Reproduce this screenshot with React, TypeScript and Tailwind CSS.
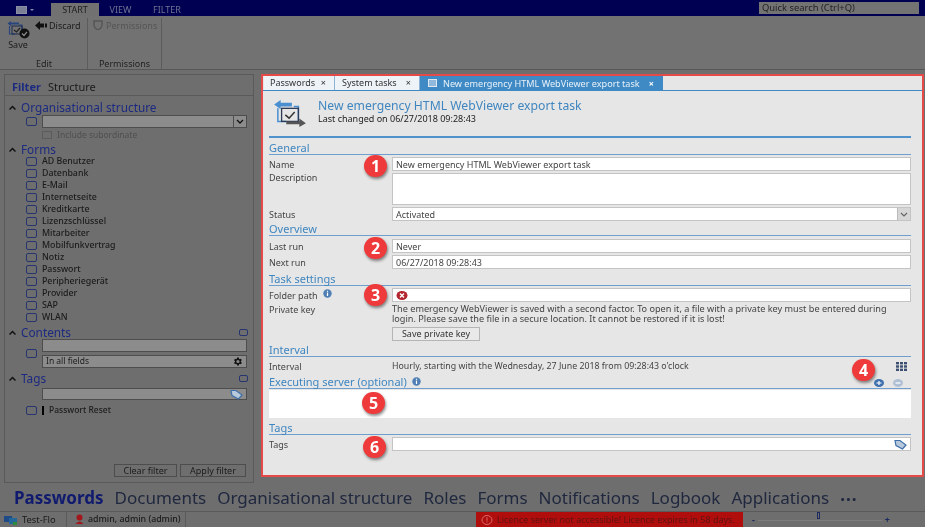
import React from "react";

const Check = ({ className = "" }: { className?: string }) => (
  <div className={`w-[11px] h-[9px] shrink-0 rounded-[2px] border border-[#26346f] ${className}`} />
);

const Chevron = () => (
  <svg width="7" height="6" viewBox="0 0 7 6" className="shrink-0">
    <path d="M0.5 4.5 L3.5 1.5 L6.5 4.5" fill="none" stroke="#111" strokeWidth="1.5" />
  </svg>
);

const TagIcon = () => (
  <svg width="13" height="11" viewBox="0 0 13 11" className="shrink-0">
    <path d="M1 1.5 H6 L12 6 L8.5 10 L2 6.5 Z" fill="#b9c9dc" stroke="#3f6fa8" strokeWidth="1.2" />
  </svg>
);

const Info = () => (
  <svg width="9" height="9" viewBox="0 0 9 9" className="shrink-0">
    <circle cx="4.5" cy="4.5" r="4.2" fill="#4f7fb5" />
    <rect x="3.9" y="3.6" width="1.2" height="3.4" fill="#fff" />
    <rect x="3.9" y="1.8" width="1.2" height="1.1" fill="#fff" />
  </svg>
);

const TaskIcon = () => (
  <svg width="36" height="28" viewBox="0 0 36 30" className="shrink-0">
    <path d="M1 6 L8 1 V4 H20 V8 H8 V11 Z" fill="#4a8fd0" />
    <path d="M5 10 V24 H14 M27 24 V8 H22" fill="none" stroke="#4a8fd0" strokeWidth="1.6" />
    <rect x="9" y="10" width="18" height="14" fill="none" stroke="#2f3a55" strokeWidth="1.4" />
    <path d="M13 17 L17 20.5 L23 14" fill="none" stroke="#333" strokeWidth="1.6" />
    <path d="M14 24 H28 V21 L35 26 L28 30 V27 H14 Z" fill="#555" />
  </svg>
);

const SaveIcon = () => (
  <svg width="23" height="19" viewBox="0 0 23 19" className="shrink-0">
    <path d="M0.5 3.5 L4 1 V2.5 H12 V4.5 H4 V6 Z" fill="#27457c" />
    <path d="M2.5 6 V14 H8 M15 12 V5 H12" fill="none" stroke="#27457c" strokeWidth="1.1" />
    <rect x="5" y="6" width="10" height="8" fill="none" stroke="#1d2b4d" strokeWidth="1" />
    <path d="M7 10 L9.5 12 L13 8" fill="none" stroke="#222" strokeWidth="1.2" />
    <circle cx="17.5" cy="13.5" r="5" fill="#111" />
    <path d="M15 13.5 L17 15.5 L20 11.8" fill="none" stroke="#8a8a8a" strokeWidth="1.2" />
  </svg>
);

const Section = ({ title, info = false, right, className = "" }: { title: string; info?: boolean; right?: React.ReactNode; className?: string }) => (
  <div className={`flex items-end justify-between h-[14px] border-b border-[#6f9fcf] ${className}`}>
    <div className="flex items-center gap-[5px] text-[11px] leading-[13px] text-[#3f86c0]">
      {title}
      {info && <Info />}
    </div>
    {right}
  </div>
);

const Row = ({ label, info = false, children, className = "", labelClass = "pt-[1px] leading-[13px]" }: { label: string; info?: boolean; children: React.ReactNode; className?: string; labelClass?: string }) => (
  <div className={`flex ${className}`}>
    <div className={`w-[123px] shrink-0 flex items-start gap-[5px] text-[#444] ${labelClass}`}>
      {label}
      {info && <Info />}
    </div>
    <div className="flex-1 min-w-0">{children}</div>
  </div>
);

const Input = ({ children, className = "" }: { children?: React.ReactNode; className?: string }) => (
  <div className={`h-[14px] bg-white border border-[#c4c4c4] px-[3px] flex items-center justify-between text-[#444] leading-none ${className}`}>
    {children}
  </div>
);

const Badge = ({ n, className }: { n: number; className: string }) => (
  <div className={`absolute w-[23px] h-[22px] rounded-full bg-[#ee3a3a] text-white text-[16px] font-bold leading-[22px] text-center shadow-[1px_2px_3px_rgba(0,0,0,0.45)] ${className}`}>
    {n}
  </div>
);

const SideHeading = ({ title, toggle = false, className = "" }: { title: string; toggle?: boolean; className?: string }) => (
  <div className={`flex items-center gap-[5px] h-[13px] pl-[4px] pr-[5px] ${className}`}>
    <Chevron />
    <span className="text-[11.8px] leading-none text-[#1c2a80]">{title}</span>
    {toggle && <div className="ml-auto w-[9px] h-[7px] rounded-[2px] border border-[#26346f]" />}
  </div>
);

const SideInput = ({ children, className = "" }: { children?: React.ReactNode; className?: string }) => (
  <div className={`w-[205px] h-[13px] bg-[#8c8c8c] border border-[#4d4d4d] px-[3px] flex items-center justify-between leading-none text-[#1b1b1b] ${className}`}>
    {children}
  </div>
);

const forms = ["AD Benutzer", "Datenbank", "E-Mail", "Internetseite", "Kreditkarte", "Lizenzschlüssel", "Mitarbeiter", "Mobilfunkvertrag", "Notiz", "Passwort", "Peripheriegerät", "Provider", "SAP", "WLAN"];
const nav = ["Documents", "Organisational structure", "Roles", "Forms", "Notifications", "Logbook", "Applications"];

export default function App() {
  return (
    <div className="w-[925px] h-[527px] overflow-hidden flex flex-col bg-[#6e6e6e] text-[9px] text-[#1b1b1b] blur-[0.35px]" style={{ fontFamily: '"Noto Sans", "Open Sans", sans-serif' }}>
      {/* Title bar */}
      <div className="h-[16px] shrink-0 bg-[#000052] flex items-end pl-[15px] pr-[6px]">
        <div className="w-[36px] h-[13px] flex items-center gap-[3px] pl-[1px]">
          <div className="w-[11px] h-[8px] border border-[#8a8fa5] bg-[#7b8097]" />
          <div className="w-0 h-0 border-x-[2px] border-x-transparent border-t-[2px] border-t-[#8a8fa5]" />
        </div>
        <div className="w-[48px] h-[13px] bg-[#717171] text-center leading-[13px] text-[#1d1d1d] text-[9px]">START</div>
        <div className="w-[43px] h-[13px] text-center leading-[13px] text-[#6d7290] text-[9px]">VIEW</div>
        <div className="w-[50px] h-[13px] text-center leading-[13px] text-[#6d7290] text-[9px]">FILTER</div>
        <div className="ml-auto mb-[1px] w-[160px] h-[12px] bg-[#737373] pl-[3px] leading-[12px] text-[#222] text-[9.4px] self-center mt-[1px]">Quick search (Ctrl+Q)</div>
      </div>

      {/* Ribbon */}
      <div className="h-[54px] shrink-0 flex border-b border-[#575757] pt-[2px] bg-[#727272]">
        <div className="w-[88px] flex flex-col border-r border-[#5c5c5c]">
          <div className="flex-1 flex">
            <div className="w-[35px] flex flex-col items-center pl-[1px] pt-[2px]">
              <SaveIcon />
              <span className="mt-[0px] leading-[11px]">Save</span>
            </div>
            <div className="flex items-start gap-[2px] pt-[2px]">
              <svg width="12" height="9" viewBox="0 0 12 9" className="mt-[1px]"><path d="M0 4.5 L5 0 V2.5 H9 V6.5 H5 V9 Z" fill="#111" /><rect x="10" y="2.5" width="2" height="4" fill="#111" /></svg>
              <span className="leading-[11px]">Discard</span>
            </div>
          </div>
          <div className="h-[11px] text-center leading-[11px] text-[#222] pl-[1px]">Edit</div>
        </div>
        <div className="w-[74px] flex flex-col border-r border-[#5c5c5c]">
          <div className="flex-1 flex items-start gap-[3px] pl-[5px] pt-[2px] text-[#555]">
            <svg width="10" height="10" viewBox="0 0 10 10"><path d="M1 1 H9 V5 Q9 8 5 10 Q1 8 1 5 Z" fill="none" stroke="#555" strokeWidth="1.4" /></svg>
            <span className="leading-[11px]">Permissions</span>
          </div>
          <div className="h-[11px] text-center leading-[11px] text-[#222]">Permissions</div>
        </div>
      </div>

      {/* Main */}
      <div className="flex-1 min-h-0 flex items-start pt-[4px] pl-[4px] pr-[1px]">
        {/* Sidebar */}
        <div className="w-[250px] h-[409px] shrink-0 border border-[#5a5a5a] flex flex-col">
          <div className="h-[21px] flex items-end gap-[7px] pl-[7px] pb-[1px] border-b border-[#5a5a5a] text-[11px] leading-[14px]">
            <span className="font-bold text-[#1c2a80]">Filter</span>
            <span>Structure</span>
          </div>
          <SideHeading title="Organisational structure" className="mt-[5px]" />
          <div className="flex items-center gap-[5px] pl-[21px] mt-[1px]">
            <Check />
            <SideInput className="!pr-0">
              <span className="ml-auto w-[13px] h-full border-l border-[#4d4d4d] flex items-center justify-center">
                <svg width="8" height="5" viewBox="0 0 8 5"><path d="M1 1 L4 4 L7 1" fill="none" stroke="#111" strokeWidth="1.3" /></svg>
              </span>
            </SideInput>
          </div>
          <div className="flex items-center gap-[5px] pl-[37px] mt-[1px] h-[12px] text-[#4f4f4f]">
            <div className="w-[10px] h-[8px] border border-[#5c5c5c]" />
            <span className="text-[8.5px]">Include subordinate</span>
          </div>
          <SideHeading title="Forms" className="mt-[2px]" />
          <div className="flex flex-col -mt-[1px]">
            {forms.map((f) => (
              <div key={f} className="h-[12px] flex items-center gap-[5px] pl-[21px] leading-none">
                <Check />
                <span className="font-medium text-[8.8px]">{f}</span>
              </div>
            ))}
          </div>
          <SideHeading title="Contents" toggle className="mt-[3px]" />
          <div className="flex items-center gap-[5px] pl-[21px]">
            <Check />
            <div className="flex flex-col gap-[3px]">
              <SideInput />
              <SideInput>
                <span className="text-[8.5px]">In all fields</span>
                <svg width="11" height="11" viewBox="0 0 24 24"><path fill="#111" d="M19.4 13a7.5 7.5 0 0 0 0-2l2.1-1.6-2-3.5-2.5 1a7.5 7.5 0 0 0-1.7-1L15 3.2h-4l-.4 2.7a7.5 7.5 0 0 0-1.7 1l-2.5-1-2 3.5L6.5 11a7.5 7.5 0 0 0 0 2l-2.1 1.6 2 3.5 2.5-1a7.5 7.5 0 0 0 1.7 1l.4 2.7h4l.4-2.7a7.5 7.5 0 0 0 1.7-1l2.5 1 2-3.5zM13 15.5a3.5 3.5 0 1 1 0-7 3.5 3.5 0 0 1 0 7z" /></svg>
              </SideInput>
            </div>
          </div>
          <SideHeading title="Tags" toggle className="mt-[4px]" />
          <div className="pl-[37px] mt-[3px]">
            <SideInput className="!h-[12px]"><span /><TagIcon /></SideInput>
          </div>
          <div className="flex items-center gap-[5px] pl-[21px] mt-[4px] h-[12px]">
            <Check />
            <div className="w-[2px] h-[9px] bg-black" />
            <span className="font-medium text-[8.5px]">Passwort Reset</span>
          </div>
          <div className="mt-auto mb-[5px] flex justify-end gap-[3px] pr-[7px]">
            <div className="w-[63px] h-[13px] border border-[#4d4d4d] text-center leading-[11px]">Clear filter</div>
            <div className="w-[66px] h-[13px] border border-[#4d4d4d] text-center leading-[11px]">Apply filter</div>
          </div>
        </div>

        {/* Right panel */}
        <div className="relative ml-[7px] w-[663px] h-[403px] border-[2px] border-[#e34a48] bg-[#e6e6e6] flex flex-col">
          {/* Tabs */}
          <div className="h-[15px] shrink-0 flex border-b border-[#3f8ac5] pl-[1px] text-[9px] leading-[13px] text-[#333] bg-[#e6e6e6]">
            <div className="w-[71px] bg-[#eef3f7] border-r border-[#8fb4d4] pl-[6px] flex justify-between pr-[8px]"><span>Passwords</span><span>×</span></div>
            <div className="w-[85px] bg-[#eef3f7] border-r border-[#8fb4d4] pl-[7px] flex justify-between pr-[8px]"><span>System tasks</span><span>×</span></div>
            <div className="w-[243px] bg-[#3f8ac5] text-white pl-[8px] pr-[9px] flex items-center gap-[6px]">
              <div className="w-[9px] h-[8px] border border-[#dfe8f0] bg-[#8fb8dc]" />
              <span className="text-[#e8f1f8] text-[9.1px] whitespace-nowrap">New emergency HTML WebViewer export task</span>
              <span className="ml-auto font-bold">×</span>
            </div>
          </div>
          {/* Form */}
          <div className="flex-1 flex flex-col pl-[6px] pr-[11px]">
            <div className="h-[47px] shrink-0 flex pl-[3px] pt-[8px] gap-[10px] border-b-[2px] border-[#4f92cc]">
              <TaskIcon />
              <div className="-mt-[1px]">
                <div className="text-[12.2px] leading-[15px] text-[#3f86c0] whitespace-nowrap">New emergency HTML WebViewer export task</div>
                <div className="leading-[11px] text-[#222]">Last changed on 06/27/2018 09:28:43</div>
              </div>
            </div>
            <Section title="General" className="mt-[3px]" />
            <Row label="Name" className="mt-[2px]"><Input>New emergency HTML WebViewer export task</Input></Row>
            <Row label="Description" className="mt-[2px]" labelClass="leading-[10px]"><Input className="!h-[32px]" /></Row>
            <Row label="Status" className="mt-[2px]">
              <Input className="!pr-0">
                Activated
                <span className="w-[13px] h-full bg-[#d6d6d6] border-l border-[#bbb] flex items-center justify-center">
                  <svg width="8" height="5" viewBox="0 0 8 5"><path d="M1 1 L4 4 L7 1" fill="none" stroke="#666" strokeWidth="1.2" /></svg>
                </span>
              </Input>
            </Row>
            <Section title="Overview" className="mt-[1px]" />
            <Row label="Last run" className="mt-[3px]"><Input>Never</Input></Row>
            <Row label="Next run" className="mt-[2px]"><Input>06/27/2018 09:28:43</Input></Row>
            <Section title="Task settings" className="mt-[3px]" />
            <Row label="Folder path" info className="mt-[2px]">
              <Input>
                <svg width="12" height="9" viewBox="0 0 12 9"><ellipse cx="6" cy="4.5" rx="5.5" ry="4.5" fill="#b3262e" /><path d="M4 2.5 L8 6.5 M8 2.5 L4 6.5" stroke="#fff" strokeWidth="1.4" /></svg>
              </Input>
            </Row>
            <Row label="Private key" className="mt-[1px]" labelClass="leading-[13px]">
              <div className="text-[9.15px] leading-[10px] pt-[1px] text-[#444] whitespace-nowrap">
                The emergency WebViewer is saved with a second factor. To open it, a file with a private key must be entered during<br />
                login. Please save the file in a secure location. It cannot be restored if it is lost!
              </div>
              <div className="w-[88px] h-[14px] mt-[3px] bg-[#e9e9e9] border border-[#b5b5b5] text-center leading-[12px] text-[#333]">Save private key</div>
            </Row>
            <Section title="Interval" className="mt-[2px]" />
            <Row label="Interval" className="mt-[2px] !items-center">
              <div className="flex items-center justify-between pr-[4px] text-[#444] leading-[13px]">
                <span className="text-[8.8px]">Hourly, starting with the Wednesday, 27 June 2018 from 09:28:43 o'clock</span>
                <svg width="11" height="9" viewBox="0 0 11 9" fill="#3d4f70">
                  <rect x="0" y="0" width="3" height="2.4" /><rect x="4" y="0" width="3" height="2.4" /><rect x="8" y="0" width="3" height="2.4" />
                  <rect x="0" y="3.3" width="3" height="2.4" /><rect x="4" y="3.3" width="3" height="2.4" /><rect x="8" y="3.3" width="3" height="2.4" />
                  <rect x="0" y="6.6" width="3" height="2.4" /><rect x="4" y="6.6" width="3" height="2.4" /><rect x="8" y="6.6" width="3" height="2.4" />
                </svg>
              </div>
            </Row>
            <Section
              title="Executing server (optional)"
              info
              right={
                <div className="flex gap-[9px] pr-[8px] pb-[1px]">
                  <svg width="10" height="8" viewBox="0 0 10 8"><ellipse cx="5" cy="4" rx="5" ry="4" fill="#3f70ae" /><path d="M2.5 4 H7.5 M5 2 V6" stroke="#fff" strokeWidth="1.2" /></svg>
                  <svg width="10" height="8" viewBox="0 0 10 8"><ellipse cx="5" cy="4" rx="5" ry="4" fill="#b0c0d4" /><path d="M2.5 4 H7.5" stroke="#fff" strokeWidth="1.2" /></svg>
                </div>
              }
              className="mt-[2px]"
            />
            <div className="h-[28px] shrink-0 bg-white mt-[1px]" />
            <Section title="Tags" className="mt-[3px]" />
            <Row label="Tags" className="mt-[2px]"><Input><span /><TagIcon /></Input></Row>
          </div>
          <Badge n={1} className="left-[101px] top-[79px]" />
          <Badge n={2} className="left-[101px] top-[161px]" />
          <Badge n={3} className="left-[101px] top-[208px]" />
          <Badge n={4} className="left-[589px] top-[283px]" />
          <Badge n={5} className="left-[99px] top-[316px]" />
          <Badge n={6} className="left-[100px] top-[360px]" />
        </div>
      </div>

      {/* Nav */}
      <div className="h-[29px] shrink-0 flex items-center pl-[14px] gap-[11px] border-b border-[#5a5a5a] text-[17px] leading-none text-[#20283f]">
        <span className="font-bold text-[#101a6e]">Passwords</span>
        {nav.map((n) => <span key={n}>{n}</span>)}
        <span className="font-bold tracking-[1px] -mt-[5px]">...</span>
      </div>

      {/* Status */}
      <div className="h-[15px] shrink-0 flex items-center text-[9px] leading-none">
        <div className="w-[67px] h-full flex items-center gap-[5px] pl-[4px] border-r border-[#5a5a5a]">
          <svg width="13" height="10" viewBox="0 0 13 10"><rect x="0" y="1" width="8" height="6" fill="#1f4a86" /><rect x="5" y="3" width="8" height="6" fill="#24689a" /><rect x="9" y="7" width="4" height="3" fill="#2f8a3a" /></svg>
          <span className="text-[9.4px]">Test-Flo</span>
        </div>
        <div className="w-[119px] h-full flex items-center gap-[4px] pl-[8px] border-r border-[#5a5a5a]">
          <svg width="9" height="11" viewBox="0 0 9 11"><circle cx="4.5" cy="3.5" r="3" fill="#a3161c" /><path d="M0.5 10 Q4.5 5 8.5 10 Z" fill="#a3161c" /></svg>
          <span className="font-medium text-[8.8px] whitespace-nowrap">admin, admin (admin)</span>
        </div>
        <div className="ml-[290px] w-[267px] h-full bg-[#b00d0d] flex items-center gap-[4px] pl-[5px] text-[#5e1414]">
          <svg width="12" height="10" viewBox="0 0 12 10" className="shrink-0"><ellipse cx="6" cy="5" rx="5" ry="4.5" fill="none" stroke="#d86a6a" strokeWidth="1" /><rect x="5.5" y="2.3" width="1" height="3.4" fill="#d86a6a" /><rect x="5.5" y="6.4" width="1" height="1" fill="#d86a6a" /></svg>
          <span className="whitespace-nowrap text-[9px]">Licence server not accessible! Licence expires in 58 days.</span>
        </div>
        <div className="relative w-[138px] ml-[9px] flex items-center justify-between text-[#1c2a60]">
          <div className="absolute left-[6px] right-[8px] top-1/2 h-px bg-[#7d7d7d]" />
          <span className="relative font-bold">-</span>
          <div className="absolute left-[65px] top-[-3px] w-[3px] h-[7px] border border-[#1c2a60]" />
          <span className="relative font-bold">+</span>
        </div>
      </div>
    </div>
  );
}
